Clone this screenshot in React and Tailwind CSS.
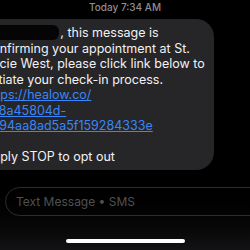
const App = () => {
  return (
    <div
      className="w-[250px] h-[250px] overflow-hidden bg-black relative"
      style={{ fontFamily: "Inter, 'Liberation Sans', sans-serif" }}
    >
      {/* Timestamp */}
      <div className="h-[14px] pt-[1px] text-center text-[10px] leading-[12px] font-medium text-[#8e8e93]">
        Today 7:34 AM
      </div>

      {/* Message bubble */}
      <div className="mt-[5px] ml-[-30px] w-[244px] h-[151px] rounded-[18px] bg-[#262628] pl-[15px] pt-[6px] text-[12.5px] leading-[15.5px] text-[#f2f2f4] whitespace-nowrap">
        <div className="flex items-center">
          <span>Hi </span>
          <span className="inline-block w-[64px] h-[15px] rounded-[6px] bg-[#050505] ml-[-2px] mr-[1px]"></span>
          <span>, this message is</span>
        </div>
        <div>confirming your appointment at St.</div>
        <div>Lucie West, please click link below to</div>
        <div>initiate your check-in process.</div>
        <div className="text-[#3a86f8] underline">https://healow.co/</div>
        <div className="text-[#3a86f8] underline">7e8a45804d-</div>
        <div className="text-[#3a86f8] underline">cc94aa8ad5a5f159284333e</div>
        <div>&nbsp;</div>
        <div>Reply STOP to opt out</div>
      </div>

      {/* Bottom area */}
      <div className="absolute left-0 right-0 top-[172px] bottom-0 bg-gradient-to-b from-black to-[#121214]"></div>
      <div className="relative mt-[17px] ml-[5px] w-[260px] h-[29px] rounded-full border border-[#2c2c2e] flex items-center pl-[10px] text-[12px] text-[#505052]">
        Text Message • SMS
      </div>
      <div className="relative mt-[23px] mx-auto w-[119px] h-[4px] rounded-full bg-white"></div>
    </div>
  );
};

export default App;
